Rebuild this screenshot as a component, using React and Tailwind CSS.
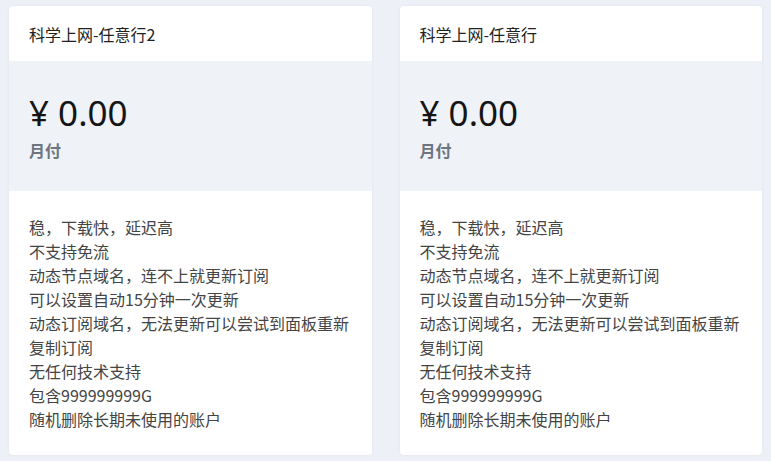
import React from "react";

const features = [
  "稳，下载快，延迟高",
  "不支持免流",
  "动态节点域名，连不上就更新订阅",
  "可以设置自动15分钟一次更新",
  "动态订阅域名，无法更新可以尝试到面板重新",
  "复制订阅",
  "无任何技术支持",
  "包含999999999G",
  "随机删除长期未使用的账户",
];

function Card({ title }) {
  return (
    <div className="flex flex-col overflow-hidden rounded-[4px] bg-white shadow-[0_0_3px_rgba(0,0,0,0.06)]">
      <div className="flex h-[55px] items-center px-5 text-[16px] leading-6 text-[#222]">
        {title}
      </div>
      <div className="flex h-[130px] flex-col bg-[#eff2f7] px-5 pt-[31px]">
        <div className="font-['Noto_Sans','Noto_Sans_CJK_SC',sans-serif] text-[35px] leading-[42px] text-[#151515]">
          ¥ 0.00
        </div>
        <div className="mt-[4px] text-[16px] font-bold leading-6 text-[#6c7580]">月付</div>
      </div>
      <div className="flex flex-col px-5 pb-6 pt-[24px] text-[16px] leading-6 text-[#444]">
        {features.map((f) => (
          <div key={f}>{f}</div>
        ))}
      </div>
    </div>
  );
}

export default function App() {
  return (
    <div className="min-h-[461px] w-[771px] bg-[#edf1f7] px-[9px] pt-[6px] font-['Noto_Sans_CJK_SC','Noto_Sans',sans-serif]">
      <div className="grid grid-cols-2 gap-[28px]">
        <Card title="科学上网-任意行2" />
        <Card title="科学上网-任意行" />
      </div>
    </div>
  );
}
